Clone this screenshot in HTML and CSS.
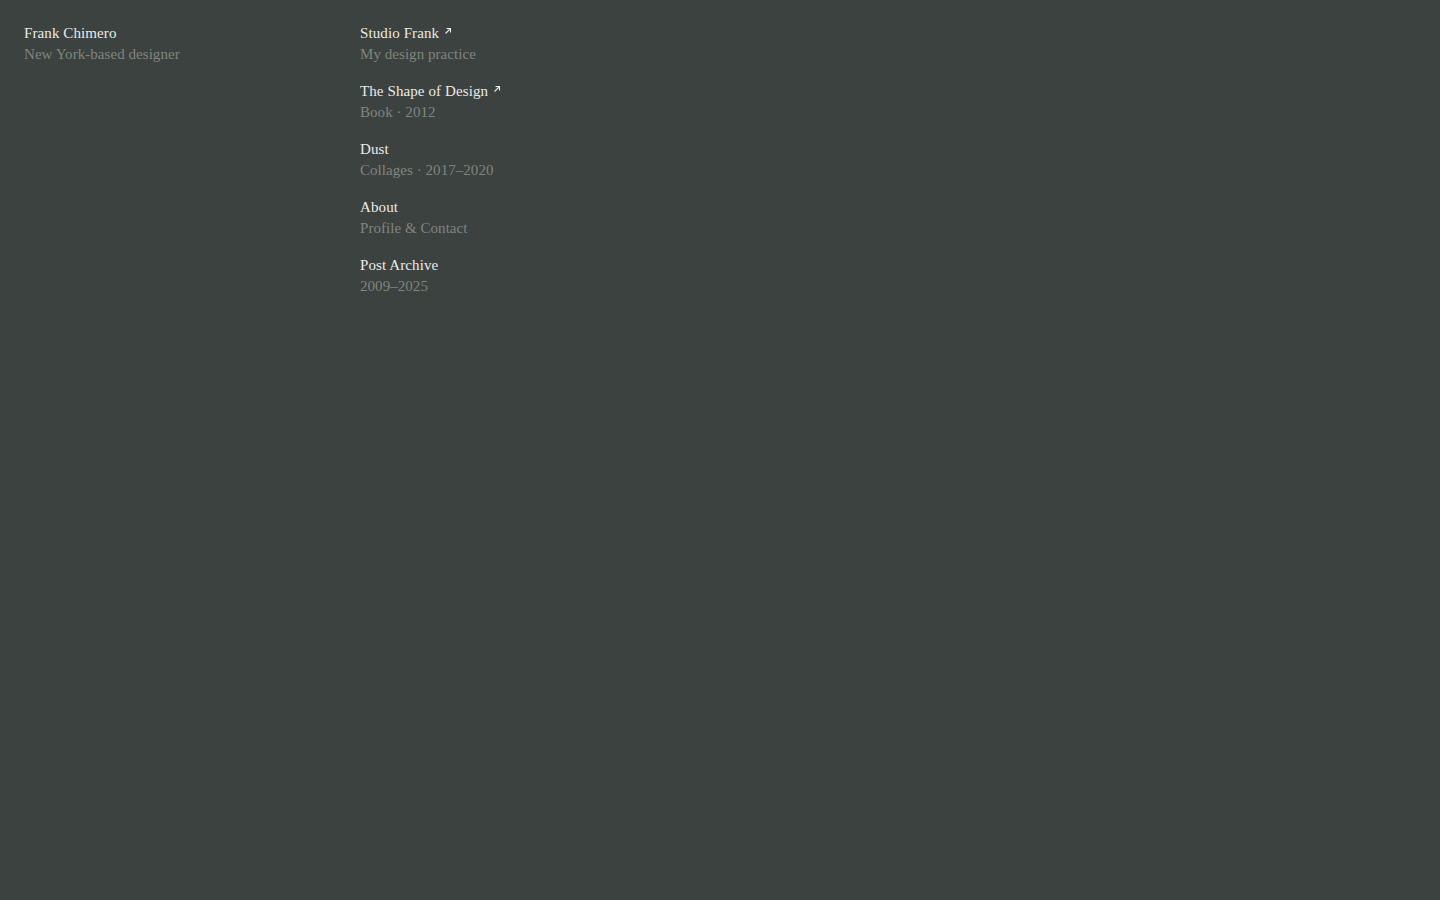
FILE: index.html
```html
<!DOCTYPE html>
<html lang="en">
<head>
<meta charset="utf-8">
<title>Frank Chimero</title>
<link rel="stylesheet" href="styles.css">
</head>
<body>
<div class="page">
  <header class="intro">
    <div class="title">Frank Chimero</div>
    <div class="sub">New York-based designer</div>
  </header>
  <nav class="links">
    <a class="item" href="#">
      <span class="title">Studio Frank<svg class="arrow" viewBox="0 0 8 8" width="8" height="8"><path d="M1.5 6.5 L6.5 1.5 M2.5 1.5 H6.5 V5.5" fill="none" stroke="currentColor" stroke-width="1.1"/></svg></span>
      <span class="sub">My design practice</span>
    </a>
    <a class="item" href="#">
      <span class="title">The Shape of Design<svg class="arrow" viewBox="0 0 8 8" width="8" height="8"><path d="M1.5 6.5 L6.5 1.5 M2.5 1.5 H6.5 V5.5" fill="none" stroke="currentColor" stroke-width="1.1"/></svg></span>
      <span class="sub">Book · 2012</span>
    </a>
    <a class="item" href="#">
      <span class="title">Dust</span>
      <span class="sub">Collages · 2017–2020</span>
    </a>
    <a class="item" href="#">
      <span class="title">About</span>
      <span class="sub">Profile &amp; Contact</span>
    </a>
    <a class="item" href="#">
      <span class="title">Post Archive</span>
      <span class="sub">2009–2025</span>
    </a>
  </nav>
</div>
</body>
</html>
```

FILE: styles.css
```css
html, body {
  margin: 0;
  padding: 0;
  background: #3c4240;
  height: 100%;
}
body {
  font-family: "Liberation Serif", "Times New Roman", serif;
  font-size: 15px;
  line-height: 21px;
  color: #ebebe6;
  font-variant-numeric: oldstyle-nums;
}
.page {
  display: flex;
  padding: 23px 24px;
}
.intro {
  width: 336px;
  display: flex;
  flex-direction: column;
}
.links {
  display: flex;
  flex-direction: column;
  gap: 16px;
}
.item {
  display: flex;
  flex-direction: column;
  text-decoration: none;
  color: inherit;
}
.title {
  color: #ebebe6;
  display: flex;
  align-items: center;
  letter-spacing: 0.1px;
}
.sub {
  color: #80857f;
  letter-spacing: 0.05px;
}
.arrow {
  margin-left: 5px;
  margin-top: -5px;
}
```
